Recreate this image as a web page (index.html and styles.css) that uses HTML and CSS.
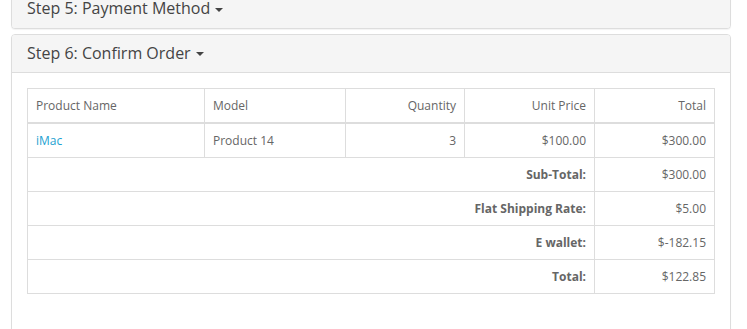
FILE: index.html
```
<!DOCTYPE html>
<html lang="en">

<head>
    <meta charset="UTF-8">
    <meta name="viewport" content="width=device-width, initial-scale=1.0">
    <title>Checkout</title>
    <link rel="stylesheet" href="styles.css">
</head>

<body>

    <div class="checkout">
        <div class="panel-group">
            <div class="panel">
                <div class="panel-heading last">
                    <h4 class="panel-title">Step 5: Payment Method <span class="caret"></span></h4>
                </div>
            </div>

            <div class="panel">
                <div class="panel-heading">
                    <h4 class="panel-title">Step 6: Confirm Order <span class="caret"></span></h4>
                </div>
                <div class="panel-body">
                    <table class="table">
                        <thead>
                            <tr>
                                <td class="c1">Product Name</td>
                                <td class="c2">Model</td>
                                <td class="c3 right">Quantity</td>
                                <td class="c4 right">Unit Price</td>
                                <td class="right">Total</td>
                            </tr>
                        </thead>
                        <tbody>
                            <tr>
                                <td><a href="#">iMac</a></td>
                                <td>Product 14</td>
                                <td class="right">3</td>
                                <td class="right">$100.00</td>
                                <td class="right">$300.00</td>
                            </tr>
                        </tbody>
                        <tfoot>
                            <tr>
                                <td colspan="4" class="right"><strong>Sub-Total:</strong></td>
                                <td class="right">$300.00</td>
                            </tr>
                            <tr>
                                <td colspan="4" class="right"><strong>Flat Shipping Rate:</strong></td>
                                <td class="right">$5.00</td>
                            </tr>
                            <tr>
                                <td colspan="4" class="right"><strong>E wallet:</strong></td>
                                <td class="right">$-182.15</td>
                            </tr>
                            <tr>
                                <td colspan="4" class="right"><strong>Total:</strong></td>
                                <td class="right">$122.85</td>
                            </tr>
                        </tfoot>
                    </table>
                </div>
            </div>
        </div>
    </div>

</body>

</html>
```

FILE: styles.css
```
* {
    box-sizing: border-box;
}

body {
    margin: 0;
    font-family: "Open Sans", sans-serif;
    font-size: 12px;
    color: #666;
    background-color: #fff;
}

.checkout {
    width: 731px;
    padding-left: 11px;
}

/* page is scrolled a little, first panel sits partly above */
.panel-group {
    margin-top: -11px;
}

.panel {
    border: 1px solid #ddd;
    border-radius: 4px;
    background-color: #fff;
    box-shadow: 0 1px 1px rgba(0, 0, 0, 0.05);
}

.panel + .panel {
    margin-top: 5px;
}

.panel-heading {
    padding: 10px 15px;
    background-color: #f5f5f5;
    border-bottom: 1px solid #ddd;
    border-radius: 3px 3px 0 0;
}

.panel-heading.last {
    border-bottom: 0;
    border-radius: 3px;
}

.panel-title {
    margin: 0;
    font-size: 16px;
    font-weight: 400;
    line-height: 1.1;
    color: #444;
}

.caret {
    display: inline-block;
    width: 0;
    height: 0;
    margin-left: 1px;
    vertical-align: middle;
    border-top: 4px solid #444;
    border-left: 4px solid transparent;
    border-right: 4px solid transparent;
}

.panel-body {
    padding: 15px 15px 20px;
}

.table {
    width: 100%;
    border-collapse: collapse;
    border: 1px solid #ddd;
    margin-bottom: 20px;
}

.table td {
    padding: 8px;
    line-height: 17px;
    border: 1px solid #ddd;
    vertical-align: top;
}

.table thead td {
    border-bottom-width: 2px;
}

.c1 {
    width: 177px;
}

.c2 {
    width: 141px;
}

.c3 {
    width: 119px;
}

.c4 {
    width: 130px;
}

.right {
    text-align: right;
}

a {
    color: #23a1d1;
    text-decoration: none;
}

strong {
    font-weight: 700;
}
```
